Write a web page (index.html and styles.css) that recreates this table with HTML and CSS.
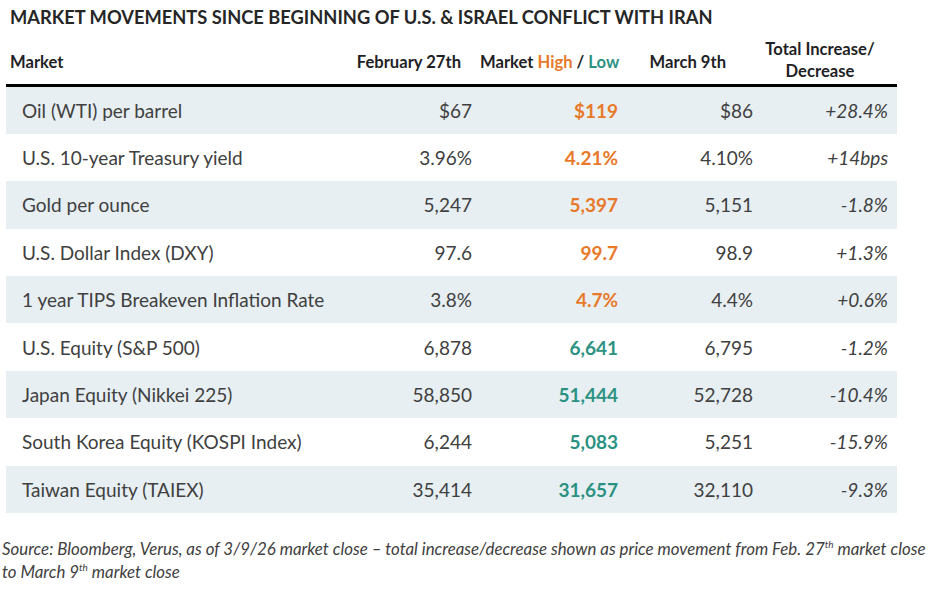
FILE: index.html
```html
<!DOCTYPE html>
<html lang="en">
<head>
<meta charset="utf-8">
<title>Market Movements</title>
<link rel="stylesheet" href="styles.css">
</head>
<body>
<div class="page">
  <h1 class="title">MARKET MOVEMENTS SINCE BEGINNING OF U.S. &amp; ISRAEL CONFLICT WITH IRAN</h1>
  <table class="mkt">
    <colgroup>
      <col class="c1"><col class="c2"><col class="c3"><col class="c4"><col class="c5">
    </colgroup>
    <thead>
      <tr>
        <th class="h-market">Market</th>
        <th class="h-feb">February 27th</th>
        <th class="h-hl">Market <span class="hi">High</span> / <span class="lo">Low</span></th>
        <th class="h-mar">March 9th</th>
        <th class="h-tot">Total Increase/<br>Decrease</th>
      </tr>
    </thead>
    <tbody>
      <tr class="shade"><td>Oil (WTI) per barrel</td><td>$67</td><td class="hi">$119</td><td>$86</td><td class="pct">+28.4%</td></tr>
      <tr><td>U.S. 10-year Treasury yield</td><td>3.96%</td><td class="hi">4.21%</td><td>4.10%</td><td class="pct">+14bps</td></tr>
      <tr class="shade"><td>Gold per ounce</td><td>5,247</td><td class="hi">5,397</td><td>5,151</td><td class="pct">-1.8%</td></tr>
      <tr><td>U.S. Dollar Index (DXY)</td><td>97.6</td><td class="hi">99.7</td><td>98.9</td><td class="pct">+1.3%</td></tr>
      <tr class="shade"><td>1 year TIPS Breakeven Inflation Rate</td><td>3.8%</td><td class="hi">4.7%</td><td>4.4%</td><td class="pct">+0.6%</td></tr>
      <tr><td>U.S. Equity (S&amp;P 500)</td><td>6,878</td><td class="lo">6,641</td><td>6,795</td><td class="pct">-1.2%</td></tr>
      <tr class="shade"><td>Japan Equity (Nikkei 225)</td><td>58,850</td><td class="lo">51,444</td><td>52,728</td><td class="pct">-10.4%</td></tr>
      <tr><td>South Korea Equity (KOSPI Index)</td><td>6,244</td><td class="lo">5,083</td><td>5,251</td><td class="pct">-15.9%</td></tr>
      <tr class="shade"><td>Taiwan Equity (TAIEX)</td><td>35,414</td><td class="lo">31,657</td><td>32,110</td><td class="pct">-9.3%</td></tr>
    </tbody>
  </table>
  <p class="source">Source: Bloomberg, Verus, as of 3/9/26 market close – total increase/decrease shown as price movement from Feb. 27<sup>th</sup> market close<br>to March 9<sup>th</sup> market close</p>
</div>
</body>
</html>
```
FILE: styles.css
```css
html, body {
  margin: 0;
  padding: 0;
  background: #ffffff;
}
.page {
  width: 945px;
  font-family: Lato, "Open Sans", "Liberation Sans", sans-serif;
  color: #404040;
}
.title {
  margin: 0;
  padding: 6px 0 0 10px;
  height: 34px;
  box-sizing: border-box;
  font-size: 18.3px;
  font-weight: 700;
  color: #262626;
  line-height: 22px;
  white-space: nowrap;
}
.mkt {
  margin-left: 6px;
  width: 891px;
  border-collapse: collapse;
  table-layout: fixed;
}
.c1 { width: 334px; }
.c2 { width: 140px; }
.c3 { width: 150px; }
.c4 { width: 135px; }
.c5 { width: 132px; }
.mkt th {
  height: 51px;
  box-sizing: border-box;
  padding: 6px 0 0 0;
  font-size: 16.6px;
  font-weight: 700;
  color: #1f1f26;
  text-align: right;
  vertical-align: middle;
  line-height: 22px;
  border-bottom: 3px solid #000000;
  white-space: nowrap;
}
.mkt th.h-market { text-align: left; padding-left: 4px; }
.mkt th.h-feb { padding-right: 19px; }
.mkt th.h-hl { padding-right: 13px; }
.mkt th.h-mar { padding-right: 39px; }
.mkt th.h-tot { text-align: center; padding-right: 22px; padding-top: 2px; }
.mkt td {
  height: 47.4px;
  padding: 0 9px 0 0;
  font-size: 19px;
  text-align: right;
  vertical-align: middle;
  color: #404040;
  white-space: nowrap;
}
.mkt td:first-child {
  text-align: left;
  padding-left: 16px;
}
.mkt td:nth-child(2) { padding-right: 8px; }
.mkt td:nth-child(3) { padding-right: 12px; font-weight: 700; }
.mkt td:nth-child(4) { padding-right: 12px; }
.mkt td.pct { font-style: italic; padding-right: 9px; }
.shade td { background: #e7eff3; }
.hi, .mkt td.hi { color: #e8792a; }
.lo, .mkt td.lo { color: #2b9283; }
.source {
  margin: 24px 0 0 2px;
  width: 940px;
  font-size: 16.85px;
  font-style: italic;
  line-height: 23px;
  color: #404040;
  white-space: nowrap;
}
.source sup {
  font-size: 10px;
  line-height: 0;
  vertical-align: 7px;
}
```
